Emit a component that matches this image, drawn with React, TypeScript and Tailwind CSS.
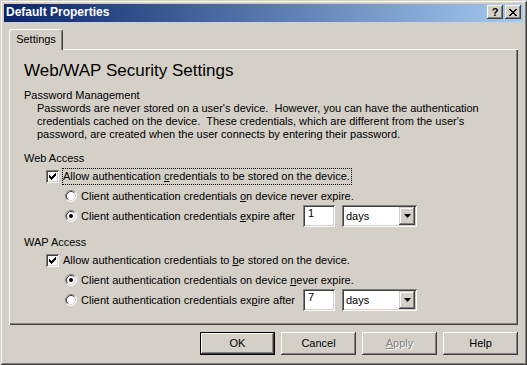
import React from "react";

const sunken =
  "shadow-[inset_1px_1px_#808080,inset_-1px_-1px_#ffffff,inset_2px_2px_#404040,inset_-2px_-2px_#d4d0c8]";
const raised =
  "shadow-[inset_-1px_-1px_#404040,inset_1px_1px_#ffffff,inset_-2px_-2px_#808080,inset_2px_2px_#d4d0c8]";

function CheckBox() {
  const cols: [number, number][] = [
    [2, 4],
    [3, 5],
    [4, 6],
    [3, 5],
    [2, 4],
    [1, 3],
    [0, 2],
  ];
  return (
    <div
      className={
        "w-[13px] h-[13px] bg-white shrink-0 shadow-[inset_1px_1px_#808080,inset_-1px_-1px_#ffffff,inset_2px_2px_#404040,inset_-2px_-2px_#d4d0c8]"
      }
    >
      <svg width="13" height="13" className="block" shapeRendering="crispEdges">
        {cols.map(([a, b], i) => (
          <rect key={i} x={3 + i} y={3 + a} width={1} height={b - a + 1} fill="#000" />
        ))}
      </svg>
    </div>
  );
}

function Radio({ checked }: { checked?: boolean }) {
  return (
    <svg width="12" height="12" className="block shrink-0">
      <circle cx="6" cy="6" r="5" fill="#ffffff" />
      <path d="M2.11 9.89 A5.5 5.5 0 0 1 9.89 2.11" stroke="#808080" strokeWidth="1" fill="none" />
      <path d="M9.89 2.11 A5.5 5.5 0 0 1 2.11 9.89" stroke="#ffffff" strokeWidth="1" fill="none" />
      <path d="M2.82 9.18 A4.5 4.5 0 0 1 9.18 2.82" stroke="#404040" strokeWidth="1" fill="none" />
      <path d="M9.18 2.82 A4.5 4.5 0 0 1 2.82 9.18" stroke="#d4d0c8" strokeWidth="1" fill="none" />
      {checked && <circle cx="6" cy="6" r="2" fill="#000" />}
    </svg>
  );
}

function NumBox({ value }: { value: string }) {
  return (
    <div
      className={
        "w-[32px] h-[22px] bg-white pl-[5px] pt-[2px] leading-[13px] shrink-0 shadow-[inset_1px_1px_#808080,inset_-1px_-1px_#ffffff,inset_2px_2px_#404040,inset_-2px_-2px_#d4d0c8]"
      }
    >
      {value}
    </div>
  );
}

function Combo() {
  return (
    <div
      className={
        "ml-[7px] w-[75px] h-[22px] bg-white p-[2px] flex shrink-0 shadow-[inset_1px_1px_#808080,inset_-1px_-1px_#ffffff,inset_2px_2px_#404040,inset_-2px_-2px_#d4d0c8]"
      }
    >
      <div className="flex-1 flex items-center pl-[2px] leading-[13px]">days</div>
      <div
        className={
          "w-[16px] bg-[#d4d0c8] flex items-center justify-center shadow-[inset_-1px_-1px_#404040,inset_1px_1px_#d4d0c8,inset_-2px_-2px_#808080,inset_2px_2px_#ffffff]"
        }
      >
        <svg width="7" height="4" className="block">
          <polygon points="0,0 7,0 3.5,4" fill="#000" />
        </svg>
      </div>
    </div>
  );
}

function Btn({
  children,
  isDefault,
  disabled,
}: {
  children: React.ReactNode;
  isDefault?: boolean;
  disabled?: boolean;
}) {
  if (isDefault) {
    return (
      <div className="w-[75px] h-[23px] border border-black">
        <div
          className={
            "w-full h-full flex items-center justify-center shadow-[inset_-1px_-1px_#404040,inset_1px_1px_#ffffff,inset_-2px_-2px_#808080]"
          }
        >
          {children}
        </div>
      </div>
    );
  }
  return (
    <div
      className={
        "w-[75px] h-[23px] flex items-center justify-center shadow-[inset_-1px_-1px_#404040,inset_1px_1px_#ffffff,inset_-2px_-2px_#808080,inset_2px_2px_#d4d0c8] " +
        (disabled ? "text-[#808080] [text-shadow:1px_1px_0_#ffffff]" : "")
      }
    >
      {children}
    </div>
  );
}

export default function App() {
  return (
    <div
      className={
        "w-[527px] h-[365px] bg-[#d4d0c8] px-[4px] pt-[4px] flex flex-col text-[11px] leading-[13px] text-black font-['Liberation_Sans',Arial,sans-serif] shadow-[inset_1px_1px_#d4d0c8,inset_-1px_-1px_#404040,inset_2px_2px_#ffffff,inset_-2px_-2px_#808080]"
      }
    >
      {/* Title bar */}
      <div className="h-[18px] flex items-center justify-between bg-[linear-gradient(to_right,#0a246a,#a6caf0)] pl-[2px] pr-[2px]">
        <div className="text-white font-bold text-[12px] leading-[14px] pb-[2px]">Default Properties</div>
        <div className="flex gap-[2px] self-start mt-[1px]">
          <div
            className={
              "w-[16px] h-[14px] bg-[#d4d0c8] flex items-center justify-center font-bold text-[11px] leading-[11px] shadow-[inset_-1px_-1px_#404040,inset_1px_1px_#ffffff,inset_-2px_-2px_#808080,inset_2px_2px_#d4d0c8]"
            }
          >
            ?
          </div>
          <div
            className={
              "w-[16px] h-[14px] bg-[#d4d0c8] flex items-center justify-center shadow-[inset_-1px_-1px_#404040,inset_1px_1px_#ffffff,inset_-2px_-2px_#808080,inset_2px_2px_#d4d0c8]"
            }
          >
            <svg width="8" height="7" className="block" shapeRendering="crispEdges">
              {[0, 1, 2, 3, 4, 5, 6].map((i) => (
                <React.Fragment key={i}>
                  <rect x={i < 4 ? i : i + 1 - 1} y={i} width={2} height={1} fill="#000" />
                  <rect x={6 - i} y={i} width={2} height={1} fill="#000" />
                </React.Fragment>
              ))}
            </svg>
          </div>
        </div>
      </div>

      {/* Body */}
      <div className="flex-1 flex flex-col px-[5px] pt-[7px]">
        {/* Tab */}
        <div className="flex">
          <div
            className={
              "relative z-10 -mb-[1px] w-[54px] h-[21px] bg-[#d4d0c8] border-l border-t border-white border-r border-r-[#404040] rounded-t-[3px] shadow-[inset_-1px_0_#808080] flex justify-center pt-[3px]"
            }
          >
            Settings
          </div>
        </div>
        {/* Panel */}
        <div
          className={
            "h-[276px] pl-[15px] pt-[12px] shadow-[inset_1px_1px_#ffffff,inset_-1px_-1px_#404040,inset_-2px_-2px_#808080]"
          }
        >
          <div className="text-[17px] leading-[20px]">Web/WAP Security Settings</div>
          <div className="mt-[8px]">Password Management</div>
          <div className="pl-[13px] whitespace-pre">
            <div>Passwords are never stored on a user's device.  However, you can have the authentication</div>
            <div>credentials cached on the device.  These credentials, which are different from the user's</div>
            <div>password, are created when the user connects by entering their password.</div>
          </div>

          <div className="mt-[11px]">Web Access</div>
          <div className="mt-[1px]">
            <div className="h-[20px] flex items-center pl-[22px]">
              <CheckBox />
              <span className="ml-[3px] border border-dotted border-black leading-[15px] pr-[1px]">
                Allow authentication <u>c</u>redentials to be stored on the device.
              </span>
            </div>
            <div className="h-[20px] flex items-center pl-[41px]">
              <Radio />
              <span className="ml-[4px]">
                Client authentication credentials <u>o</u>n device never expire.
              </span>
            </div>
            <div className="h-[20px] flex items-center pl-[41px]">
              <Radio checked />
              <span className="ml-[4px] w-[222px] shrink-0">
                Client authentication credentials <u>e</u>xpire after
              </span>
              <NumBox value="1" />
              <Combo />
            </div>
          </div>

          <div className="mt-[10px]">WAP Access</div>
          <div className="mt-[1px]">
            <div className="h-[20px] flex items-center pl-[22px]">
              <CheckBox />
              <span className="ml-[3px] border border-transparent leading-[15px] pr-[1px]">
                Allow authentication credentials to <u>b</u>e stored on the device.
              </span>
            </div>
            <div className="h-[20px] flex items-center pl-[41px]">
              <Radio checked />
              <span className="ml-[4px]">
                Client authentication credentials on device <u>n</u>ever expire.
              </span>
            </div>
            <div className="h-[20px] flex items-center pl-[41px]">
              <Radio />
              <span className="ml-[4px] w-[222px] shrink-0">
                Client authentication credentials ex<u>p</u>ire after
              </span>
              <NumBox value="7" />
              <Combo />
            </div>
          </div>
        </div>

        {/* Buttons */}
        <div className="mt-[7px] flex justify-end gap-[6px]">
          <Btn isDefault>OK</Btn>
          <Btn>Cancel</Btn>
          <Btn disabled>
            <span>
              <u>A</u>pply
            </span>
          </Btn>
          <Btn>Help</Btn>
        </div>
      </div>
    </div>
  );
}
